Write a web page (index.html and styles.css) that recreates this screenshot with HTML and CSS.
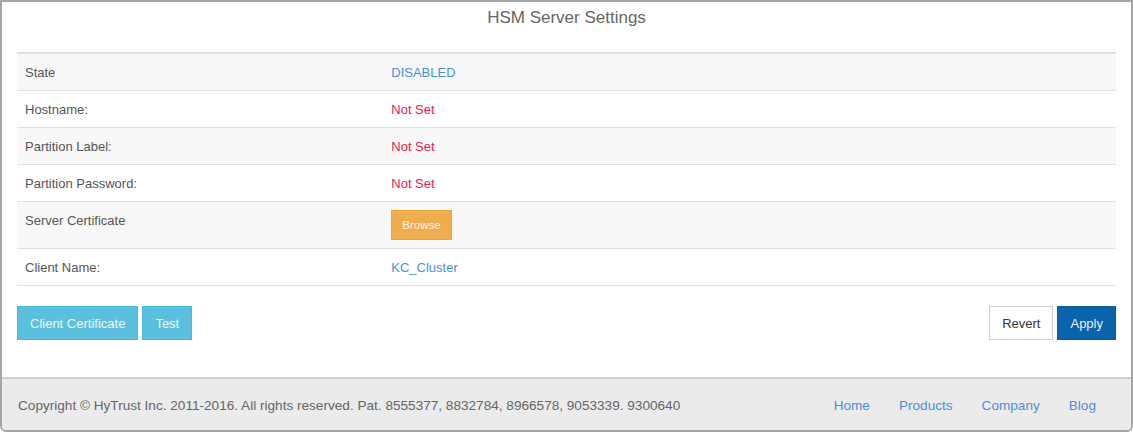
FILE: index.html
```html
<!DOCTYPE html>
<html lang="en">
<head>
<meta charset="utf-8">
<title>HSM Server Settings</title>
<link rel="stylesheet" href="styles.css">
</head>
<body>
<div class="window">
  <main class="content">
    <h1 class="title">HSM Server Settings</h1>
    <table class="settings">
      <tbody>
        <tr class="striped"><td class="label">State</td><td class="value info">DISABLED</td></tr>
        <tr><td class="label">Hostname:</td><td class="value danger">Not Set</td></tr>
        <tr class="striped"><td class="label">Partition Label:</td><td class="value danger">Not Set</td></tr>
        <tr><td class="label">Partition Password:</td><td class="value danger">Not Set</td></tr>
        <tr class="striped"><td class="label">Server Certificate</td><td class="value has-button"><button class="btn btn-sm btn-warning">Browse</button></td></tr>
        <tr><td class="label">Client Name:</td><td class="value info">KC_Cluster</td></tr>
      </tbody>
    </table>
    <div class="actions">
      <div class="group">
        <button class="btn btn-info">Client Certificate</button>
        <button class="btn btn-info">Test</button>
      </div>
      <div class="group">
        <button class="btn btn-default">Revert</button>
        <button class="btn btn-primary">Apply</button>
      </div>
    </div>
  </main>
  <footer class="footer">
    <p class="copyright">Copyright © HyTrust Inc. 2011-2016. All rights reserved. Pat. 8555377, 8832784, 8966578, 9053339. 9300640</p>
    <nav class="links">
      <a href="#">Home</a>
      <a href="#">Products</a>
      <a href="#">Company</a>
      <a href="#">Blog</a>
    </nav>
  </footer>
</div>
</body>
</html>
```

FILE: styles.css
```css
* { box-sizing: border-box; }
html, body { margin: 0; padding: 0; background: #fff; }
body {
  font-family: "Liberation Sans", Arial, sans-serif;
  font-size: 13px;
  line-height: 20px;
  color: #555;
}
.window {
  width: 1133px;
  height: 432px;
  border: 2px solid #a6a6a6;
  border-radius: 0 0 6px 6px;
  display: flex;
  flex-direction: column;
  overflow: hidden;
}
.content {
  flex: 1;
  padding: 0 15px;
}
.title {
  margin: 0 0 20px;
  padding-top: 1px;
  height: 30px;
  line-height: 30px;
  font-size: 17px;
  font-weight: normal;
  color: #666;
  text-align: center;
}
.settings {
  width: 100%;
  border-collapse: separate;
  border-spacing: 0;
  border-top: 2px solid #dedede;
  margin-bottom: 20px;
}
.settings td {
  padding: 9px 8px 7px;
  vertical-align: top;
  border-bottom: 1px solid #e0e0e0;
}
.settings td.has-button { padding: 8px; }
.settings .label { width: 33.33%; color: #555; }
.settings tr.striped td { background: #f8f8f8; }
.info { color: #4a90d6; }
.danger { color: #e51d4c; }
.actions {
  display: flex;
  justify-content: space-between;
}
.group { display: flex; gap: 4px; }
.btn {
  font-family: inherit;
  font-size: 13px;
  line-height: 20px;
  padding: 7px 12px 5px;
  border: 1px solid transparent;
  border-radius: 0;
  cursor: pointer;
}
.btn-sm {
  font-size: 11.5px;
  line-height: 18px;
  padding: 5px 10px;
}
.btn-warning { background: #f0ad4e; border-color: #eea236; color: #fdf3e3; }
.btn-info { background: #5bc0de; border-color: #46b8da; color: #eef8fc; }
.btn-default { background: #fff; border-color: #ccc; color: #333; }
.btn-primary { background: #0a64ad; border-color: #0a5ca0; color: #e8f1f9; }
.footer {
  height: 53px;
  border-top: 2px solid #cfcfcf;
  background: #ebebeb;
  display: flex;
  align-items: center;
  justify-content: space-between;
  padding: 2px 35px 0 16px;
  font-size: 13.6px;
}
.copyright { margin: 0; color: #666; }
.links { display: flex; gap: 29px; }
.links a { color: #4a90d6; text-decoration: none; }
```
